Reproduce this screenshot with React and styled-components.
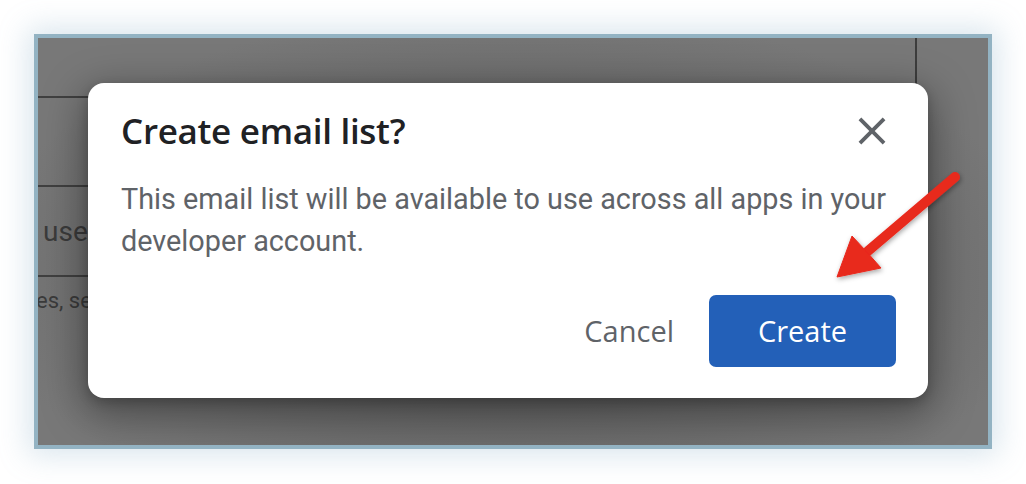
import React from "react";
import styled, { createGlobalStyle } from "styled-components";

const Global = createGlobalStyle`
  html, body { margin: 0; padding: 0; background: #ffffff; }
  body { width: 1026px; height: 484px; overflow: hidden; }
  * { box-sizing: border-box; }
`;

const Page = styled.div`
  position: relative;
  width: 1026px;
  height: 484px;
  padding: 34px 0 0 34px;
  background: #ffffff;
`;

const Frame = styled.div`
  position: relative;
  width: 958px;
  height: 415px;
  border: 4px solid #93b3c3;
  box-shadow: 0 0 28px 6px rgba(120, 160, 190, 0.28);
  overflow: hidden;
  background: radial-gradient(ellipse at 50% 58%, #555555 0%, #6a6a6a 45%, #787878 80%);
`;

const Table = styled.div`
  width: 879px;
  display: flex;
  flex-direction: column;
  font-family: Roboto, "Liberation Sans", sans-serif;
`;

const HeaderRow = styled.div`
  height: 60px;
  border-right: 2px solid #3d3d3d;
  border-bottom: 2px solid #404040;
`;

const Row = styled.div`
  height: ${(p) => p.$h}px;
  border-bottom: ${(p) => (p.$line ? "2px solid #404040" : "none")};
  display: flex;
  align-items: ${(p) => (p.$top ? "flex-start" : "center")};
  padding-left: ${(p) => p.$pl || 0}px;
  padding-top: ${(p) => p.$pt || 0}px;
  color: #3b3b3b;
  font-size: ${(p) => p.$fs}px;
  white-space: nowrap;
  overflow: hidden;
`;

const Backdrop = styled.div`
  position: absolute;
  inset: 0;
  display: flex;
  align-items: flex-start;
  padding: 45px 0 0 50px;
`;

const Dialog = styled.div`
  width: 840px;
  height: 315px;
  background: #ffffff;
  border-radius: 16px;
  box-shadow: 0 12px 40px 6px rgba(0, 0, 0, 0.35), 0 4px 12px rgba(0, 0, 0, 0.2);
  padding: 28px 32px 31px 33px;
  display: flex;
  flex-direction: column;
`;

const Header = styled.div`
  height: 40px;
  display: flex;
  align-items: center;
  justify-content: space-between;
`;

const Title = styled.h2`
  margin: 0;
  font-family: "Open Sans", "Liberation Sans", sans-serif;
  font-weight: 600;
  font-size: 35px;
  line-height: 40px;
  color: #202124;
  letter-spacing: -0.3px;
`;

const CloseButton = styled.button`
  width: 46px;
  height: 46px;
  margin-right: 1px;
  padding: 0;
  border: none;
  background: transparent;
  display: flex;
  align-items: center;
  justify-content: center;
  color: #5f6368;
`;

const Body = styled.p`
  margin: 27px 0 0 0;
  font-family: Roboto, "Liberation Sans", sans-serif;
  font-size: 28.8px;
  line-height: 42px;
  color: #5f6368;
  width: 790px;
`;

const Actions = styled.div`
  margin-top: auto;
  display: flex;
  justify-content: flex-end;
  align-items: center;
  gap: 11px;
`;

const TextButton = styled.button`
  height: 72px;
  padding: 0 24px 2px;
  border: none;
  background: transparent;
  font-family: "Open Sans", "Liberation Sans", sans-serif;
  font-weight: 500;
  font-size: 29px;
  color: #5f6368;
`;

const PrimaryButton = styled.button`
  height: 72px;
  width: 187px;
  padding: 0 0 2px;
  border: none;
  border-radius: 7px;
  background: #2360b8;
  font-family: "Open Sans", "Liberation Sans", sans-serif;
  font-weight: 500;
  font-size: 29px;
  color: #ffffff;
`;

const ArrowLayer = styled.svg`
  position: absolute;
  left: 0;
  top: 0;
  width: 1026px;
  height: 484px;
  pointer-events: none;
  overflow: visible;
`;

export default function App() {
  return (
    <>
      <Global />
      <Page>
        <Frame>
          <Table>
            <HeaderRow />
            <Row $h={89} $line />
            <Row $h={90} $line $pl={5} $fs={28}>
              users
            </Row>
            <Row $h={120} $top $pt={11} $fs={22} style={{ textIndent: "-2px" }}>
              es, settings
            </Row>
          </Table>
          <Backdrop>
            <Dialog role="dialog">
              <Header>
                <Title>Create email list?</Title>
                <CloseButton aria-label="Close">
                  <svg width="46" height="46" viewBox="0 0 24 24" fill="currentColor">
                    <path d="M19 6.41L17.59 5 12 10.59 6.41 5 5 6.41 10.59 12 5 17.59 6.41 19 12 13.41 17.59 19 19 17.59 13.41 12z" />
                  </svg>
                </CloseButton>
              </Header>
              <Body>
                This email list will be available to use across all apps in your developer account.
              </Body>
              <Actions>
                <TextButton>Cancel</TextButton>
                <PrimaryButton>Create</PrimaryButton>
              </Actions>
            </Dialog>
          </Backdrop>
        </Frame>
        <ArrowLayer viewBox="0 0 1026 484">
          <defs>
            <filter id="arrowShadow" x="-20%" y="-20%" width="140%" height="140%">
              <feDropShadow dx="1" dy="2" stdDeviation="2.5" floodColor="#000" floodOpacity="0.35" />
            </filter>
          </defs>
          <g filter="url(#arrowShadow)" fill="#e8291c" stroke="#e8291c">
            <line x1="955" y1="177" x2="868" y2="251" strokeWidth="10" strokeLinecap="round" />
            <path d="M837 277 L852 236 L866 251 L881 268 Z" strokeWidth="1" strokeLinejoin="round" />
          </g>
        </ArrowLayer>
      </Page>
    </>
  );
}
